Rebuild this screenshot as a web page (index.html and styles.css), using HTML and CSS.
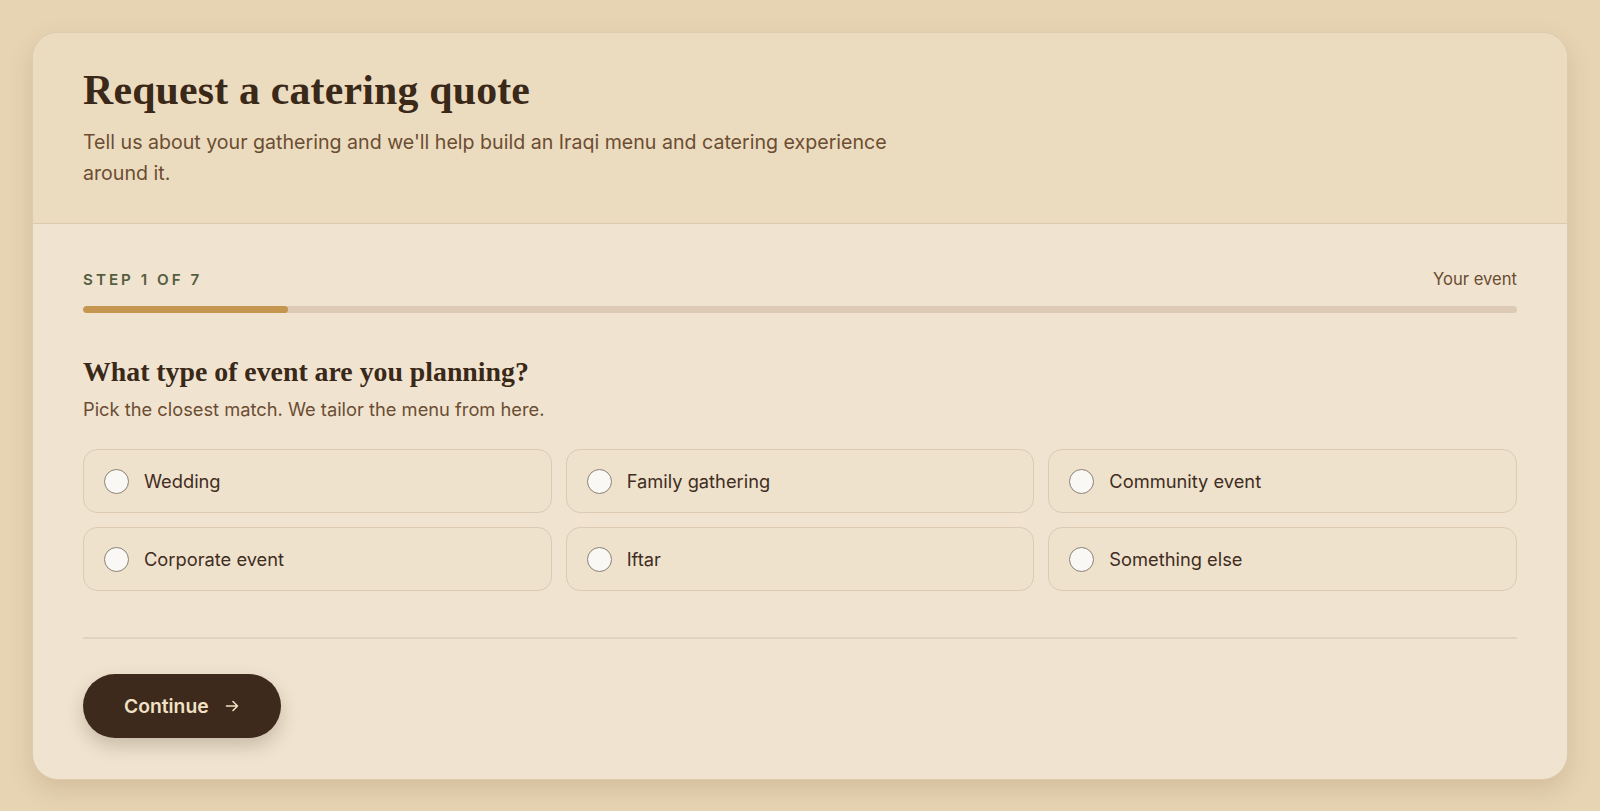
FILE: index.html
```html
<!DOCTYPE html>
<html lang="en">
<head>
<meta charset="utf-8">
<title>Request a catering quote</title>
<link rel="stylesheet" href="styles.css">
</head>
<body>
<main class="card">
  <header class="card-head">
    <h1 class="title">Request a catering quote</h1>
    <p class="lead">Tell us about your gathering and we'll help build an Iraqi menu and catering experience around it.</p>
  </header>
  <section class="card-body">
    <div class="progress-meta">
      <span class="step">STEP 1 OF 7</span>
      <span class="step-name">Your event</span>
    </div>
    <div class="track"><div class="fill" style="width:14.2857%"></div></div>

    <h2 class="question">What type of event are you planning?</h2>
    <p class="hint">Pick the closest match. We tailor the menu from here.</p>

    <div class="options">
      <label class="option"><span class="radio"></span><span class="opt-label">Wedding</span></label>
      <label class="option"><span class="radio"></span><span class="opt-label">Family gathering</span></label>
      <label class="option"><span class="radio"></span><span class="opt-label">Community event</span></label>
      <label class="option"><span class="radio"></span><span class="opt-label">Corporate event</span></label>
      <label class="option"><span class="radio"></span><span class="opt-label">Iftar</span></label>
      <label class="option"><span class="radio"></span><span class="opt-label">Something else</span></label>
    </div>

    <hr class="rule">

    <button class="continue" type="button">Continue
      <svg class="arrow" width="16" height="16" viewBox="0 0 16 16" fill="none" stroke="currentColor" stroke-width="1.6" stroke-linecap="round" stroke-linejoin="round"><path d="M2.5 8h11M9 3.5 13.5 8 9 12.5"/></svg>
    </button>
  </section>
</main>
</body>
</html>
```

FILE: styles.css
```css
* { box-sizing: border-box; }
html, body { margin: 0; }
body {
  background: #e7d4b3;
  padding: 32px 32px 31px;
  font-family: Inter, "Liberation Sans", sans-serif;
  color: #3b2a1d;
}
.card {
  border-radius: 26px;
  overflow: hidden;
  background: #f0e4d0;
  border: 1px solid #dccbae;
  box-shadow: 0 10px 24px rgba(120, 90, 50, 0.18);
}
.card-head {
  background: #ecdcbf;
  padding: 33px 50px 34px;
  border-bottom: 1px solid #dccab0;
}
.title {
  margin: 0;
  font-family: "Liberation Serif", "DejaVu Serif", serif;
  font-weight: 700;
  font-size: 41.8px;
  line-height: 48px;
  color: #3a2818;
  letter-spacing: 0.2px;
}
.lead {
  margin: 13px 0 0;
  max-width: 860px;
  font-size: 19.6px;
  line-height: 31px;
  color: #6b4d33;
}
.card-body {
  padding: 45px 50px 41px;
}
.progress-meta {
  display: flex;
  justify-content: space-between;
  align-items: center;
  height: 20px;
}
.step {
  font-size: 15.2px;
  font-weight: 600;
  letter-spacing: 3px;
  color: #555e40;
}
.step-name {
  font-size: 16.6px;
  color: #6b4d33;
}
.track {
  margin-top: 17px;
  height: 7px;
  border-radius: 4px;
  background: #dccab4;
  overflow: hidden;
}
.fill {
  height: 100%;
  background: #c4964f;
  border-radius: 4px;
}
.question {
  margin: 42px 0 0;
  font-family: "Liberation Serif", "DejaVu Serif", serif;
  font-weight: 700;
  font-size: 27.8px;
  line-height: 34px;
  color: #3a2818;
}
.hint {
  margin: 7px 0 0;
  font-size: 18.3px;
  line-height: 26px;
  color: #6b4d33;
}
.options {
  margin-top: 27px;
  display: grid;
  grid-template-columns: repeat(3, 1fr);
  gap: 14px 14px;
}
.option {
  display: flex;
  align-items: center;
  gap: 15px;
  height: 64px;
  padding: 0 20px;
  border: 1.5px solid #dccab2;
  border-radius: 14px;
  background: #efe2cd;
  cursor: pointer;
}
.radio {
  width: 25px;
  height: 25px;
  border-radius: 50%;
  border: 1.5px solid #8a8175;
  background: #faf8f4;
  flex: none;
}
.opt-label {
  font-size: 18.3px;
  color: #3f2d1f;
}
.rule {
  margin: 46px 0 0;
  border: 0;
  border-top: 2px solid #e1d3bd;
}
.continue {
  margin-top: 35px;
  display: inline-flex;
  align-items: center;
  gap: 15px;
  height: 64px;
  padding: 0 41px;
  border: 0;
  border-radius: 32px;
  background: #3d2a1c;
  color: #f2e1c4;
  font-family: Inter, "Liberation Sans", sans-serif;
  font-size: 19.3px;
  font-weight: 600;
  box-shadow: 0 8px 18px rgba(61, 42, 28, 0.22);
  cursor: pointer;
}
.arrow { display: block; }
```
